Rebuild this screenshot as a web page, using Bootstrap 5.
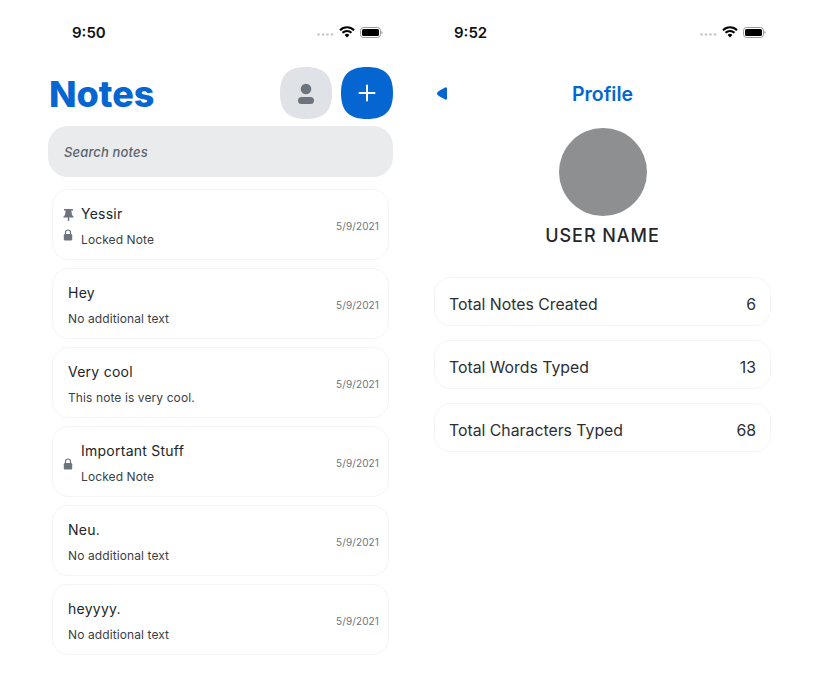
<!DOCTYPE html>
<html>
<head>
    <meta charset="utf-8">
    <meta name="viewport" content="width=device-width, initial-scale=1">
    <link href="https://cdn.jsdelivr.net/npm/bootstrap@5.3.3/dist/css/bootstrap.min.css" rel="stylesheet">
    <title>Notes</title>

    <style>
      body{
         background-color: #fff;
         font-family: Inter, "Liberation Sans", sans-serif;
         color: #212529;
      }
      .phone-left{ width: 345px; margin-left: 48px; }
      .phone-right{ width: 339px; margin-left: 40px; }
      .status-row{ height: 24px; margin-top: 20px; }
      .phone-left .status-row{ padding: 0 10px 0 24px; }
      .phone-right .status-row{ padding: 0 6px 0 21px; }
      .clock{ font-size: 15px; font-weight: 600; color: #111; padding-top: 2px; }
      .signal-dots{ width: 17px; height: 3px; margin-top: 5px; }
      .status-icons{ gap: 5px; }
      .head-row{ height: 52px; margin-top: 23px; }
      .app-title{ font-size: 36px; font-weight: 800; color: #0566d1; margin: 2px 0 0 1px; line-height: 1; }
      .square-btn{ width: 52px; height: 52px; padding: 0; border: 0; background: none; line-height: 0; }
      .gap-btn{ margin-right: 9px; }
      .search-box{ height: 51px; margin-top: 7px; background: #e9ebed; border-radius: 20px; padding: 2px 0 0 16px; }
      .search-box input{ border: 0; background: none; outline: 0; width: 100%; padding: 0; font-size: 13px; font-style: italic; font-weight: 500; letter-spacing: .15px; }
      .search-box input::placeholder{ color: #5c636a; opacity: 1; }
      .note-list{ margin-top: 12px; padding: 0 4px; gap: 8px; }
      .note-item{ height: 71px; border: 1px solid #f4f5f6; border-radius: 16px; padding: 2px 9px 0 15px; flex-direction: row; align-items: center; }
      .has-icons{ padding-left: 10px; }
      .note-icons{ width: 14px; gap: 8px; margin-top: -2px; }
      .note-name{ font-size: 14px; line-height: 17px; color: #212529; letter-spacing: .25px; }
      .note-sub{ font-size: 12px; line-height: 15px; margin-top: 10px; color: #3b4045; letter-spacing: .1px; }
      .note-date{ font-size: 10px; color: #6c757d; margin-left: auto; padding-top: 1px; letter-spacing: .12px; }
      .back-arrow{ left: 4px; top: 20px; }
      .page-title{ font-size: 19.5px; font-weight: 600; color: #0566d1; padding-top: 3px; }
      .avatar-round{ width: 88px; height: 88px; border-radius: 50%; background: #8e8f91; margin-top: 9px; }
      .user-name{ font-size: 18px; font-weight: 500; line-height: 22px; margin-top: 9px; letter-spacing: .95px; color: #24282c; }
      .stat-list{ margin-top: 30px; gap: 14px; padding: 0 1px; }
      .stat-item{ height: 49px; border: 1px solid #f4f5f6; border-radius: 16px; padding: 6px 14px 0; flex-direction: row; align-items: center; justify-content: space-between; font-size: 15.8px; font-weight: 400; color: #2b2f33; }
    </style>
</head>
<body>
   <div class="d-flex">

      <div class="phone-left">
         <div class="status-row d-flex align-items-center justify-content-between">
            <span class="clock">9:50</span>
            <div class="status-icons d-flex align-items-center">
               <svg class="signal-dots" viewBox="0 0 17 3"><g fill="#c4c6c8"><circle cx="1.5" cy="1.5" r="1.3"/><circle cx="6" cy="1.5" r="1.3"/><circle cx="10.500" cy="1.5" r="1.3"/><circle cx="15" cy="1.5" r="1.3"/></g></svg>
               <svg width="16" height="12" viewBox="0 0 16 12"><path d="M1 4.200a10 10 0 0 1 14 0M3.500 6.800a6.500 6.500 0 0 1 9 0" fill="none" stroke="#000" stroke-width="2"/><path d="M8 11.500 5.600 9a3.400 3.400 0 0 1 4.800 0z"/></svg>
               <svg width="23" height="11" viewBox="0 0 23 11"><rect x=".5" y=".5" width="20" height="10" rx="3" fill="none" stroke="#999"/><rect x="2" y="2" width="17" height="7" rx="1.500"/><path d="M21.500 4v3a1.600 1.600 0 0 0 0-3z" fill="#999"/></svg>
            </div>
         </div>

         <div class="head-row d-flex align-items-center">
            <h1 class="app-title me-auto">Notes</h1>
            <button class="square-btn gap-btn" type="button">
               <svg width="52" height="52" viewBox="0 0 52 52"><path d="M26 0C44 0 52 8 52 26S44 52 26 52 0 44 0 26 8 0 26 0z" fill="#dfe2e6"/><circle cx="26" cy="22" r="5.300" fill="#6c757d"/><rect x="18" y="30" width="16" height="7" rx="3.500" fill="#6c757d"/></svg>
            </button>
            <button class="square-btn" type="button">
               <svg width="52" height="52" viewBox="0 0 52 52"><path d="M26 0C44 0 52 8 52 26S44 52 26 52 0 44 0 26 8 0 26 0z" fill="#0566d1"/><path d="M26 18.500v15M18.500 26h15" stroke="#fff" stroke-width="2" stroke-linecap="round"/></svg>
            </button>
         </div>

         <div class="search-box d-flex align-items-center">
            <input type="text" placeholder="Search notes">
         </div>

         <div class="note-list d-flex flex-column">
            <div class="card note-item has-icons">
               <div class="note-icons d-flex flex-column align-items-start">
                  <svg width="11" height="12" viewBox="0 0 11 12"><path d="M1 0h9v1.500H8.300L9 6l1.500 1.500V8.500H6.200V12H4.800V8.500H.5V7.500L2 6l.7-4.500H1z" fill="#6c757d"/></svg>
                  <svg width="10" height="12" viewBox="0 0 10 12"><path d="M2.500 5V3.500a2.500 2.500 0 0 1 5 0V5" fill="none" stroke="#6c757d" stroke-width="1.200"/><rect x=".8" y="5" width="8.400" height="6.500" rx="1.200" fill="#6c757d"/></svg>
               </div>
               <div class="ms-1">
                  <div class="note-name">Yessir</div>
                  <div class="note-sub">Locked Note</div>
               </div>
               <span class="note-date">5/9/2021</span>
            </div>
            <div class="card note-item">
               <div>
                  <div class="note-name">Hey</div>
                  <div class="note-sub">No additional text</div>
               </div>
               <span class="note-date">5/9/2021</span>
            </div>
            <div class="card note-item">
               <div>
                  <div class="note-name">Very cool</div>
                  <div class="note-sub">This note is very cool.</div>
               </div>
               <span class="note-date">5/9/2021</span>
            </div>
            <div class="card note-item has-icons">
               <div class="note-icons d-flex flex-column align-items-start">
                  <svg class="mt-1" width="10" height="12" viewBox="0 0 10 12"><path d="M2.500 5V3.500a2.500 2.500 0 0 1 5 0V5" fill="none" stroke="#6c757d" stroke-width="1.200"/><rect x=".8" y="5" width="8.400" height="6.500" rx="1.200" fill="#6c757d"/></svg>
               </div>
               <div class="ms-1">
                  <div class="note-name">Important Stuff</div>
                  <div class="note-sub">Locked Note</div>
               </div>
               <span class="note-date">5/9/2021</span>
            </div>
            <div class="card note-item">
               <div>
                  <div class="note-name">Neu.</div>
                  <div class="note-sub">No additional text</div>
               </div>
               <span class="note-date">5/9/2021</span>
            </div>
            <div class="card note-item">
               <div>
                  <div class="note-name">heyyyy.</div>
                  <div class="note-sub">No additional text</div>
               </div>
               <span class="note-date">5/9/2021</span>
            </div>
         </div>
      </div>

      <div class="phone-right">
         <div class="status-row d-flex align-items-center justify-content-between">
            <span class="clock">9:52</span>
            <div class="status-icons d-flex align-items-center">
               <svg class="signal-dots" viewBox="0 0 17 3"><g fill="#c4c6c8"><circle cx="1.5" cy="1.5" r="1.3"/><circle cx="6" cy="1.5" r="1.3"/><circle cx="10.500" cy="1.5" r="1.3"/><circle cx="15" cy="1.5" r="1.3"/></g></svg>
               <svg width="16" height="12" viewBox="0 0 16 12"><path d="M1 4.200a10 10 0 0 1 14 0M3.500 6.800a6.500 6.500 0 0 1 9 0" fill="none" stroke="#000" stroke-width="2"/><path d="M8 11.500 5.600 9a3.400 3.400 0 0 1 4.800 0z"/></svg>
               <svg width="23" height="11" viewBox="0 0 23 11"><rect x=".5" y=".5" width="20" height="10" rx="3" fill="none" stroke="#999"/><rect x="2" y="2" width="17" height="7" rx="1.500"/><path d="M21.500 4v3a1.600 1.600 0 0 0 0-3z" fill="#999"/></svg>
            </div>
         </div>

         <div class="head-row d-flex align-items-center justify-content-center position-relative">
            <svg class="back-arrow position-absolute" width="10" height="13" viewBox="0 0 10 13"><path d="M10 1v11c-.4.6-1 .9-1.800.6C5 11 2.500 9.500 1 8.300c-1.300-1-1.300-2.600 0-3.600C2.500 3.500 5 2 8.200.4 9 .1 9.600.4 10 1z" fill="#0566d1"/></svg>
            <span class="page-title">Profile</span>
         </div>

         <div class="d-flex flex-column align-items-center">
            <div class="avatar-round"></div>
            <div class="user-name">USER NAME</div>
         </div>

         <div class="stat-list d-flex flex-column">
            <div class="card stat-item"><span>Total Notes Created</span><span>6</span></div>
            <div class="card stat-item"><span>Total Words Typed</span><span>13</span></div>
            <div class="card stat-item"><span>Total Characters Typed</span><span>68</span></div>
         </div>
      </div>

   </div>
   <script src="https://cdn.jsdelivr.net/npm/bootstrap@5.3.3/dist/js/bootstrap.bundle.min.js"></script>
</body>
</html>
